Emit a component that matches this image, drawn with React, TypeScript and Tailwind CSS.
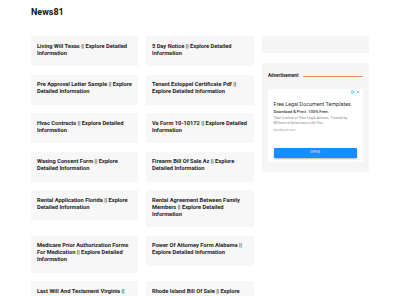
import React from "react";

const left = [
  "Living Will Texas || Explore Detailed Information",
  "Pre Approval Letter Sample || Explore Detailed Information",
  "Hvac Contracts || Explore Detailed Information",
  "Waxing Consent Form || Explore Detailed Information",
  "Rental Application Florida || Explore Detailed Information",
  "Medicare Prior Authorization Forms For Medication || Explore Detailed Information",
  "Last Will And Testament Virginia || Explore Detailed Information",
];
const right = [
  "5 Day Notice || Explore Detailed Information",
  "Tenant Estoppel Certificate Pdf || Explore Detailed Information",
  "Va Form 10-10172 || Explore Detailed Information",
  "Firearm Bill Of Sale Az || Explore Detailed Information",
  "Rental Agreement Between Family Members || Explore Detailed Information",
  "Power Of Attorney Form Alabama || Explore Detailed Information",
  "Rhode Island Bill Of Sale || Explore Detailed Information",
];

export default function App() {
  const items: string[] = [];
  left.forEach((l, i) => {
    items.push(l);
    items.push(right[i]);
  });
  return (
    <div
      className="w-[400px] h-[296px] overflow-hidden bg-white"
      style={{ fontFamily: "Roboto, 'Liberation Sans', sans-serif" }}
    >
      <div className="w-[338px] mx-auto">
        <div className="pt-[7px] h-[36px]">
          <div className="text-[9px] leading-[11px] font-bold text-[#111]">News81</div>
        </div>
        <div className="flex gap-[8px] items-start">
          <div className="w-[223px] grid grid-cols-[107px_108px] gap-x-[8px] gap-y-[8.5px] items-start">
            {items.map((t, i) => (
              <div key={i} className="bg-[#f7f7f7] px-[6px] pt-[6.5px] pb-[9.5px]">
                <div className="text-[5.7px] leading-[7px] font-bold text-[#222]">{t}</div>
              </div>
            ))}
          </div>
          <div className="w-[107px] flex flex-col gap-[10px]">
            <div className="h-[17px] bg-[#f5f5f5]" />
            <div className="bg-[#f5f5f5] px-[6px] pt-[10px] pb-[10px]">
              <div className="flex items-center gap-[5px] h-[6px]">
                <div className="text-[4.6px] leading-[6px] font-bold text-[#222]">Advertisement</div>
                <div className="flex-1 border-t border-[#ec8a66]" />
              </div>
              <div className="mt-[10px] bg-white h-[73px] relative px-[5.5px] pt-[12px]">
                <div className="absolute right-[3px] top-[1px] flex items-center gap-[1px]">
                  <svg width="4" height="4" viewBox="0 0 10 10">
                    <path d="M2 1 L9 5 L2 9 Z" fill="none" stroke="#29b6f6" strokeWidth="1.6" />
                  </svg>
                  <svg width="4" height="4" viewBox="0 0 10 10">
                    <path d="M2 2 L8 8 M8 2 L2 8" stroke="#29b6f6" strokeWidth="1.6" />
                  </svg>
                </div>
                <div className="text-[5.4px] leading-[7px] text-[#333] whitespace-nowrap">Free Legal Document Templates</div>
                <div className="mt-[1px] text-[4.2px] leading-[6px] font-medium text-[#333] whitespace-nowrap">Download &amp; Print. 100% Free.</div>
                <div className="mt-[1px] text-[3.6px] leading-[4.6px] text-[#888] whitespace-nowrap">
                  Take Control of Your Legal Actions. Trusted by
                  <br />
                  Millions of Americans Like You.
                </div>
                <div className="mt-[2.5px] text-[3.5px] leading-[4px] text-[#aaa]">lawdepot.com</div>
                <div className="absolute left-[5.5px] right-[6px] top-[59px] h-[10px] bg-[#1a8cff] rounded-[1px] shadow-[0_1px_2px_rgba(0,0,0,0.3)] flex items-center justify-center">
                  <span className="text-[3.5px] text-white/80 tracking-[0.2px]">OPEN</span>
                </div>
              </div>
            </div>
          </div>
        </div>
      </div>
    </div>
  );
}
